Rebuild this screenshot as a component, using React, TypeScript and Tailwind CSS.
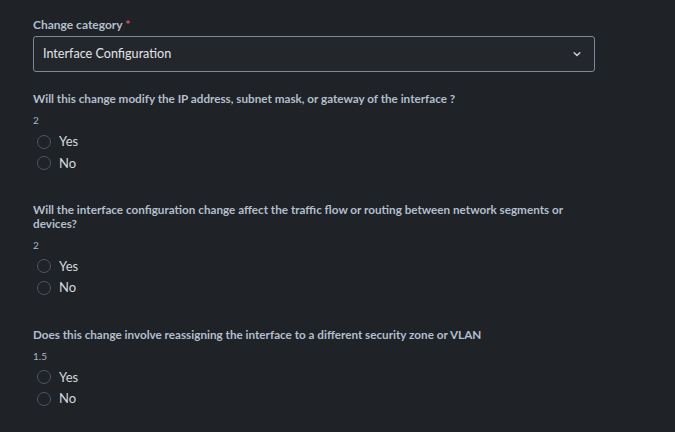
import React from "react";

function Radio({ label }: { label: string }) {
  return (
    <label className="flex items-center h-[21.5px]">
      <span className="ml-[4px] w-[14px] h-[14px] rounded-full border border-[#50565e] bg-[#1f2228]" />
      <span className="ml-[8px] text-[13px] text-[#d5d9de]">{label}</span>
    </label>
  );
}

function Question({ q, score, top }: { q: string; score: string; top: string }) {
  return (
    <div className={top}>
      <div className="text-[11.7px] font-bold leading-[14px] text-[#b3bfcc] max-w-[562px]">{q}</div>
      <div className="mt-[9px] text-[10px] leading-[13px] text-[#aab6c4]">{score}</div>
      <div className="mt-[4px] flex flex-col">
        <Radio label="Yes" />
        <Radio label="No" />
      </div>
    </div>
  );
}

export default function App() {
  return (
    <div
      className="w-[675px] h-[432px] bg-[#1f2227] overflow-hidden px-[33px] pt-[18px]"
      style={{ fontFamily: 'Lato, "Open Sans", sans-serif' }}
    >
      <div className="h-[14px] text-[12px] font-bold leading-[14px] text-[#b3bfcc]">
        Change category <span className="text-[#e0556a]">*</span>
      </div>
      <div className="mt-[4px] w-[562px] h-[36px] rounded-[3px] border border-[#7b8899] bg-[#23272c] flex items-center justify-between pl-[9px] pr-[12px]">
        <span className="text-[12.6px] text-[#e2e5e8]">Interface Configuration</span>
        <svg width="10" height="10" viewBox="0 0 16 16" fill="none" stroke="#c3ccd6" strokeWidth="2.4" strokeLinecap="round" strokeLinejoin="round">
          <path d="M3.5 6l4.5 4.5L12.5 6" />
        </svg>
      </div>
      <Question
        top="mt-[19px]"
        q="Will this change modify the IP address, subnet mask, or gateway of the interface ?"
        score="2"
      />
      <Question
        top="mt-[27.5px]"
        q="Will the interface configuration change affect the traffic flow or routing between network segments or devices?"
        score="2"
      />
      <Question
        top="mt-[28px]"
        q="Does this change involve reassigning the interface to a different security zone or VLAN"
        score="1.5"
      />
    </div>
  );
}
